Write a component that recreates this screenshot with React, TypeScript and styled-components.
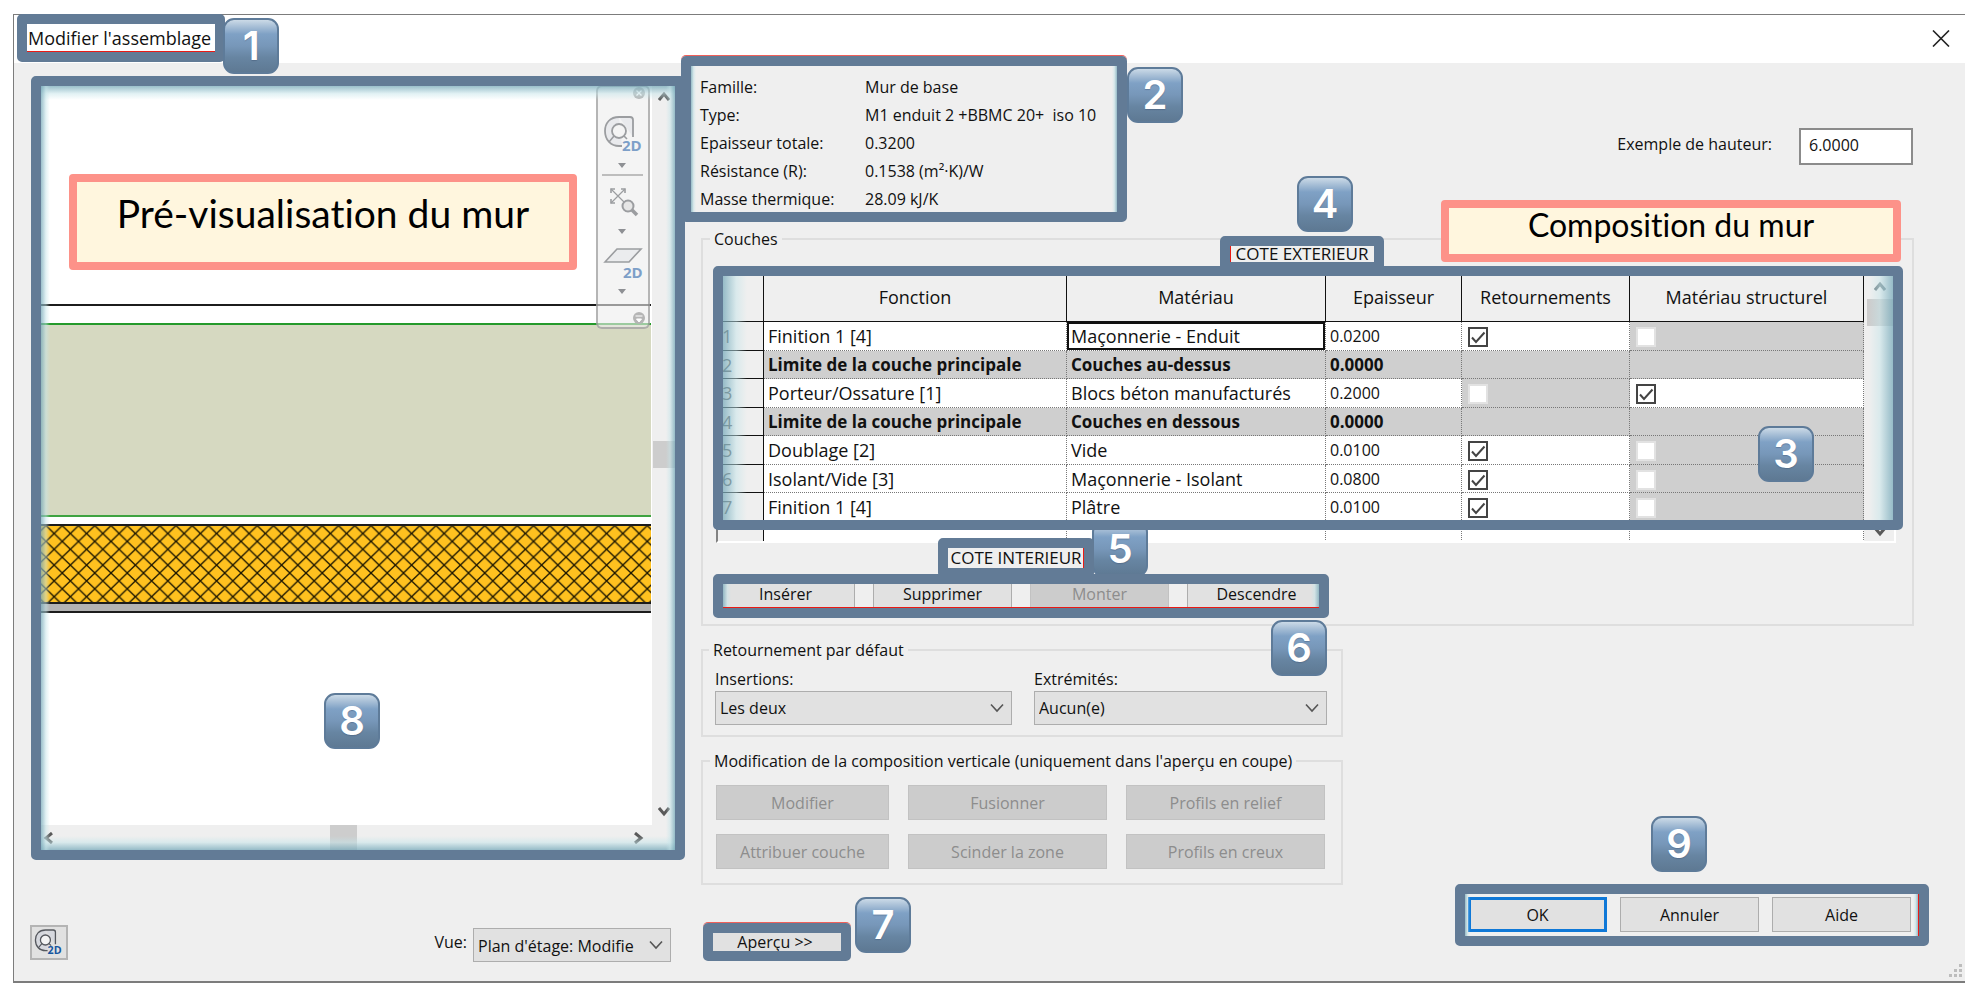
import React from "react";
import styled, { createGlobalStyle, css } from "styled-components";

const uiFont = `"Open Sans", "Noto Sans", sans-serif`;
const noteFont = `Lato, "Noto Sans", sans-serif`;
const badgeFont = `Inter, Roboto, sans-serif`;

const colors = {
  surface: "#efefef",
  frame: "#627b96",
  groupLine: "#dedede",
  muted: "#cfcfcf",
  red: "#ea1a14",
};

const GlobalStyle = createGlobalStyle`
  * { box-sizing: border-box; }
  body {
    margin: 0;
    background: #fff;
    color: #111;
    font-family: ${uiFont};
    font-size: 16px;
    line-height: 22px;
  }
  button, input, select { font: inherit; color: inherit; margin: 0; }
`;

/* ---------- window ---------- */

const Page = styled.div`
  min-height: 100vh;
  padding: 14px 17px 6px 13px;
`;

const Dialog = styled.main`
  position: relative;
  border: solid #7c7c7c;
  border-width: 1px 0 2px 1px;
  background: ${colors.surface};
`;

const TitleBar = styled.header`
  display: flex;
  align-items: center;
  justify-content: space-between;
  height: 48px;
  padding: 0 15px 2px 13px;
  background: #fff;
`;

const Title = styled.h1`
  margin: 0;
  padding: 0 4px 0 1px;
  font-size: 18px;
  font-weight: 400;
  line-height: 28px;
`;

const CloseButton = styled.button`
  display: flex;
  padding: 0;
  border: 0;
  background: none;
`;

const Body = styled.div`
  display: grid;
  grid-template-columns: minmax(0, 670fr) minmax(0, 1281fr);
`;

const ResizeGrip = styled.svg`
  position: absolute;
  right: 2px;
  bottom: 3px;
`;

/* ---------- annotations ---------- */

const Callout = styled.div`
  position: relative;
`;

type Glow = { $x?: number; $y?: number };

const Frame = styled.span<
  Glow & {
    $inset?: string;
    $redTop?: boolean;
    $redInner?: "left" | "right" | "bottom";
  }
>`
  position: absolute;
  z-index: 2;
  inset: ${(p) => p.$inset ?? "-10px"};
  border: 10px solid ${colors.frame};
  border-radius: 5px;
  pointer-events: none;
  ${(p) => p.$redTop && `box-shadow: 0 -1px 0 #f0605a;`}

  &::before {
    content: "";
    position: absolute;
    inset: 0;
    background:
      linear-gradient(to right, rgba(120, 170, 186, 0.75), rgba(196, 228, 233, 0.5) 55%, rgba(220, 240, 243, 0)) left / ${(p) => p.$x ?? 0}px 100% no-repeat,
      linear-gradient(to left, rgba(120, 170, 186, 0.75), rgba(196, 228, 233, 0.5) 55%, rgba(220, 240, 243, 0)) right / ${(p) => p.$x ?? 0}px 100% no-repeat,
      linear-gradient(to bottom, rgba(120, 170, 186, 0.75), rgba(196, 228, 233, 0.5) 55%, rgba(220, 240, 243, 0)) top / 100% ${(p) => p.$y ?? 0}px no-repeat,
      linear-gradient(to top, rgba(120, 170, 186, 0.75), rgba(196, 228, 233, 0.5) 55%, rgba(220, 240, 243, 0)) bottom / 100% ${(p) => p.$y ?? 0}px no-repeat;
    ${(p) => p.$redInner && `border-${p.$redInner}: 1px solid ${colors.red};`}
  }
`;

const Badge = styled.span<{ $left: string; $top: string; $under?: boolean }>`
  position: absolute;
  z-index: ${(p) => (p.$under ? 1 : 3)};
  left: ${(p) => p.$left};
  top: ${(p) => p.$top};
  width: 56px;
  height: 56px;
  border: 2px solid #5e7b99;
  border-radius: 11px;
  background: linear-gradient(#cbdae7, #a9c0d7 12%, #7fa1c5 27%, #7797b9 50%, #6785a2 72%, #5e7993);
  color: #fff;
  font: 600 40px / 52px ${badgeFont};
  text-align: center;
  text-shadow: 0 1px 1px rgba(60, 80, 110, 0.4);
`;

const Note = styled.p<{ $size: number; $line: number }>`
  margin: 0;
  border: 8px solid #fd9289;
  border-radius: 4px;
  background: #fff6de;
  color: #000;
  font: 400 ${(p) => p.$size}px / ${(p) => p.$line}px ${noteFont};
  font-variant-ligatures: none;
  text-align: center;
  white-space: nowrap;
`;

const PreviewNote = styled(Note)`
  position: absolute;
  z-index: 3;
  left: 28px;
  top: 88px;
  width: 508px;
  height: 96px;
`;

const CompositionNote = styled(Note)`
  position: absolute;
  z-index: 3;
  right: 64px;
  top: 137px;
  width: 460px;
  height: 62px;
`;

/* ---------- preview column ---------- */

const PreviewColumn = styled.section`
  display: flex;
  flex-direction: column;
  gap: 75px;
  padding: 23px 9px 19px 16px;
`;

const Preview = styled(Callout)`
  display: grid;
  grid-template-columns: minmax(0, 1fr) 23px;
  grid-template-rows: 739px 25px;
  margin-left: 11px;
  background: ${colors.surface};
`;

const Drawing = styled.div`
  position: relative;
  border-right: 1px solid #fff;
  background: #fff;
`;

const WallSection = styled.svg`
  display: block;
  width: 100%;
  height: 100%;
`;

const NavBar = styled.div`
  position: absolute;
  top: -1px;
  right: 1px;
  display: flex;
  flex-direction: column;
  align-items: center;
  width: 54px;
  height: 244px;
  border: 2px solid rgba(130, 130, 130, 0.55);
  border-radius: 6px;
  background: rgba(236, 236, 236, 0.6);
`;

const VerticalTrack = styled.div`
  display: flex;
  flex-direction: column;
  align-items: center;
  justify-content: space-between;
  padding: 5px 0 8px 1px;
`;

const HorizontalTrack = styled.div`
  display: flex;
  align-items: center;
  justify-content: space-between;
  padding: 0 8px 0 2px;
`;

const Thumb = styled.span<{ $w: number; $h: number }>`
  width: ${(p) => p.$w}px;
  height: ${(p) => p.$h}px;
  background: #cdcdcd;
`;

const PreviewFooter = styled.div`
  display: flex;
  align-items: flex-start;
  justify-content: space-between;
  margin-right: 4px;
`;

const IconButton = styled.button`
  width: 38px;
  height: 35px;
  padding: 0;
  border: 2px solid #b4b4b4;
  background: #e1e1e1;

  svg { display: block; margin: 0 auto; }
`;

const ViewField = styled.div`
  display: flex;
  align-items: flex-start;
  gap: 6px;
  line-height: 34px;
`;

/* ---------- controls ---------- */

const SelectBox = styled.span`
  position: relative;
  display: flex;
  width: 100%;

  svg {
    position: absolute;
    right: 8px;
    top: 12px;
    pointer-events: none;
  }
`;

const Select = styled.select`
  appearance: none;
  width: 100%;
  height: 34px;
  padding: 0 24px 0 4px;
  border: 1px solid #adadad;
  border-radius: 0;
  background: #e1e1e1;
`;

const ViewSelect = styled(SelectBox)`
  width: 198px;
  margin-top: 3px;
`;

const Button = styled.button<{ $primary?: boolean }>`
  height: 35px;
  padding: 0;
  border: 1px solid #adadad;
  background: #e1e1e1;
  white-space: nowrap;

  &:disabled {
    border-color: #c2c2c2;
    background: #cccccc;
    color: #8d8d8d;
  }

  ${(p) =>
    p.$primary &&
    css`
      border: 3px solid #0f78d7;
    `}
`;

/* ---------- right column ---------- */

const SettingsColumn = styled.section`
  position: relative;
  display: flex;
  flex-direction: column;
`;

const TopRow = styled.div`
  display: flex;
  align-items: flex-start;
  justify-content: space-between;
  padding: 3px 52px 0 7px;
`;

const WallInfo = styled(Callout)`
  width: 426px;
  height: 146px;
  padding: 7px 0 0 9px;
`;

const InfoList = styled.dl`
  display: grid;
  grid-template-columns: 165px 1fr;
  margin: 0;
  line-height: 28px;
  white-space: pre;

  dd { margin: 0; }
`;

const HeightField = styled.div`
  display: flex;
  align-items: flex-start;
  gap: 27px;
  margin-top: 62px;
  line-height: 33px;
`;

const HeightInput = styled.input`
  width: 114px;
  height: 37px;
  padding: 0 8px 3px;
  border: 2px solid #8b8b8b;
  background: #fff;
`;

const Group = styled.fieldset<{ $width?: string; $pad: string }>`
  width: ${(p) => p.$width ?? "auto"};
  min-width: 0;
  margin: 13px 51px 0 17px;
  padding: ${(p) => p.$pad};
  border: 2px solid ${colors.groupLine};

  legend {
    margin-left: -6px;
    padding: 0 4px;
    line-height: 22px;
  }
`;

const LayersGroup = styled(Group)`
  margin-top: 16px;
`;

const SideRow = styled.div<{ $edge: "outside" | "inside" }>`
  display: flex;
  justify-content: center;
  ${(p) =>
    p.$edge === "outside"
      ? "margin: -4px 0 10px; padding-right: 24px;"
      : "width: 600px; margin: 5px 0 10px;"}
`;

const SideLabel = styled(Callout)<{ $h: number; $w: number }>`
  width: ${(p) => p.$w}px;
  height: ${(p) => p.$h}px;
  font-size: 17px;
  line-height: ${(p) => p.$h}px;
  text-align: center;
  white-space: nowrap;
`;

const TableArea = styled(Callout)`
  display: grid;
  grid-template-columns: minmax(0, 1fr) 30px;
  margin-right: 16px;
  height: 271px;
  border: solid;
  border-width: 0 2px 2px 2px;
  border-color: #fff #fff #fff #828282;
  background: #fff;
`;

const TableClip = styled.div`
  overflow: hidden;
  height: 269px;

  tfoot tr { height: 20px; }
  tfoot th, tfoot td { border-bottom: 0; }
`;

const LayerTable = styled.table`
  width: 100%;
  border-collapse: separate;
  border-spacing: 0;
  table-layout: fixed;
  font-size: 18px;
  line-height: 26px;
`;

const HeadCell = styled.th`
  height: 50px;
  padding: 0;
  border: solid #111;
  border-width: 0 1px 1px 0;
  background: ${colors.surface};
  font-weight: 400;
`;

const Row = styled.tr<{ $boundary?: boolean }>`
  height: 28px;
  &:nth-child(odd) { height: 29px; }
  ${(p) =>
    p.$boundary &&
    css`
      background: ${colors.muted};
      font-weight: 700;
      font-size: 17px;
    `}
`;

const RowHead = styled.th`
  padding: 0 0 0 4px;
  border: solid #111;
  border-width: 0 1px 1px 0;
  background: ${colors.surface};
  color: #555;
  font-size: 18px;
  font-weight: 400;
  text-align: left;
`;

const Cell = styled.td<{ $off?: boolean; $active?: boolean; $small?: boolean }>`
  padding: 0 0 0 4px;
  border: dotted #777;
  border-width: 0 1px 1px 0;
  white-space: nowrap;
  ${(p) => p.$off && `background: ${colors.muted};`}
  ${(p) => p.$small && "font-size: 16px;"}
  ${(p) => p.$active && "box-shadow: inset 0 0 0 2px #111;"}
`;

const CheckBox = styled.span`
  position: relative;
  display: block;

  svg {
    position: absolute;
    left: 5px;
    top: 4px;
    pointer-events: none;
  }
`;

const Check = styled.input`
  appearance: none;
  display: block;
  width: 20px;
  height: 20px;
  border: 2px solid #444;
  background: #fff;

  && { margin: 2px 0 0 2px; }
  &:disabled { border-color: #e2e2e2; }
`;

const TableTrack = styled.div`
  display: flex;
  flex-direction: column;
  align-items: center;
  padding: 9px 0 4px 2px;
  background: ${colors.surface};

  svg:last-child { margin-top: auto; }
  span { margin-top: 6px; }
`;

const RowActions = styled(Callout)`
  display: grid;
  grid-template-columns: repeat(4, 139px);
  gap: 18px;
  width: 610px;

  button { height: 34px; padding-bottom: 2px; }
`;

const FieldGrid = styled.div`
  display: grid;
  grid-template-columns: 297px 293px;
  column-gap: 22px;
  row-gap: 1px;
`;

const ActionGrid = styled.div`
  display: grid;
  grid-template-columns: 173px 199px 199px;
  gap: 14px 19px;
`;

const BottomRow = styled.div`
  display: flex;
  align-items: flex-start;
  justify-content: space-between;
  padding: 9px 46px 0 29px;
`;

const PreviewToggle = styled(Callout)`
  display: grid;
  width: 128px;
  height: 18px;
  margin-top: 39px;

  button {
    height: 18px;
    border: 0;
    line-height: 18px;
    padding-right: 4px;
  }
`;

const DialogActions = styled(Callout)`
  display: grid;
  grid-template-columns: repeat(3, 139px);
  gap: 13px;
  padding: 3px 8px 4px 3px;
`;

/* ---------- icons ---------- */

const Chevron = ({ dir, color = "#5a5a5a" }: { dir: "up" | "down" | "left" | "right"; color?: string }) => {
  const d = {
    up: "M1 9 L6 3 L11 9",
    down: "M1 3 L6 9 L11 3",
    left: "M9 1 L3 6 L9 11",
    right: "M3 1 L9 6 L3 11",
  }[dir];
  return (
    <svg width="12" height="12" viewBox="0 0 12 12" aria-hidden="true">
      <path d={d} fill="none" stroke={color} strokeWidth="3" />
    </svg>
  );
};

const Caret = () => (
  <svg width="14" height="10" viewBox="0 0 14 10" aria-hidden="true">
    <path d="M1 1.5 L7 8 L13 1.5" fill="none" stroke="#555" strokeWidth="1.6" />
  </svg>
);

const Tick = () => (
  <svg width="15" height="14" viewBox="0 0 15 14" aria-hidden="true">
    <path d="M1 6.500 L5 11 L13.500 1.500" fill="none" stroke="#444" strokeWidth="2" />
  </svg>
);

const Wheel2D = ({ ink, blue, shade }: { ink: string; blue: string; shade: string }) => (
  <>
    <path
      d="M15 1 H26 Q29 1 29 4 V21 M15 1 C6 1 1 7 1 15 C1 24 7 30 15 30 H18"
      fill={shade}
      stroke={ink}
      strokeWidth="1.8"
    />
    <circle cx="15" cy="15" r="7" fill="#f4f4f4" stroke={ink} strokeWidth="1.8" />
    <path d="M10 20 L5 26 M20 20 L23 23" stroke={ink} strokeWidth="1.6" />
    <text x="18" y="35" fill={blue} fontFamily="Open Sans, sans-serif" fontSize="15" fontWeight="700">
      2D
    </text>
  </>
);

const NavIcons = () => (
  <svg width="50" height="240" viewBox="0 0 50 240" role="img" aria-label="Navigation 2D">
    <g>
      <circle cx="41" cy="6" r="6" fill="#b5b5b5" />
      <path d="M38.500 3.500 L43.500 8.500 M43.500 3.500 L38.500 8.500" stroke="#fff" strokeWidth="1.3" />
    </g>
    <g transform="translate(6 29)">
      <Wheel2D ink="#9b9da0" blue="#7d9fc8" shade="#e9eaed" />
    </g>
    <path d="M20 76 H28 L24 81 Z M20 142 H28 L24 147 Z M20 202 H28 L24 207 Z" fill="#8e9094" />
    <path d="M4 88 H45" stroke="#bdbdbd" strokeWidth="2" />
    <g fill="none" stroke="#9b9da0" strokeWidth="1.600">
      <path d="M13 102 L27 116 M27 102 L13 116" strokeWidth="1.200" />
      <path d="M13 106 V102 H17 M23 102 H27 V106 M13 112 V116 H17" />
      <circle cx="30" cy="119" r="5.500" fill="#e6e6e6" strokeWidth="2" />
      <path d="M34 123 L39 128" strokeWidth="3.500" />
      <path d="M7 175 L19 162 H43 L31 175 Z" fill="#ebecee" />
    </g>
    <text x="25" y="191" fill="#7d9fc8" fontFamily="Open Sans, sans-serif" fontSize="15" fontWeight="700">
      2D
    </text>
    <circle cx="41" cy="231" r="6" fill="#b5b5b5" />
    <path d="M37.500 229 H44.500 M38.500 232 H43.500 L41 235 Z" fill="#fff" stroke="#fff" />
  </svg>
);

const WallPreview = () => (
  <WallSection role="img" aria-label="Coupe du mur">
    <defs>
      <pattern id="insulation" width="16.25" height="15.800" x="5" y="13" patternUnits="userSpaceOnUse">
        <path d="M0 0 L16.250 15.800 M16.250 0 L0 15.800" stroke="#1c1600" strokeWidth="1.300" />
      </pattern>
    </defs>
    <rect y="218" width="100%" height="2" fill="#1c1c1c" />
    <rect y="237" width="100%" height="193" fill="#d6d9c1" />
    <rect y="237" width="100%" height="2" fill="#259a2b" />
    <rect y="429" width="100%" height="2" fill="#3fa341" />
    <rect y="439" width="100%" height="78" fill="#ffc11f" />
    <rect y="439" width="100%" height="78" fill="url(#insulation)" />
    <rect y="438" width="100%" height="2" fill="#1c1c1c" />
    <rect y="516" width="100%" height="10" fill="#b3b3b3" />
    <rect y="516" width="100%" height="2" fill="#1c1c1c" />
    <rect y="525" width="100%" height="2" fill="#1c1c1c" />
  </WallSection>
);

/* ---------- data ---------- */

const info: [string, string][] = [
  ["Famille:", "Mur de base"],
  ["Type:", "M1 enduit 2 +BBMC 20+  iso 10"],
  ["Epaisseur totale:", "0.3200"],
  ["Résistance (R):", "0.1538 (m²·K)/W"],
  ["Masse thermique:", "28.09 kJ/K"],
];

type Layer = {
  role: string;
  material: string;
  thickness: string;
  boundary?: boolean;
  wraps?: boolean;
  structural?: boolean;
};

const layers: Layer[] = [
  { role: "Finition 1 [4]", material: "Maçonnerie - Enduit", thickness: "0.0200", wraps: true },
  { role: "Limite de la couche principale", material: "Couches au-dessus", thickness: "0.0000", boundary: true },
  { role: "Porteur/Ossature [1]", material: "Blocs béton manufacturés", thickness: "0.2000", structural: true },
  { role: "Limite de la couche principale", material: "Couches en dessous", thickness: "0.0000", boundary: true },
  { role: "Doublage [2]", material: "Vide", thickness: "0.0100", wraps: true },
  { role: "Isolant/Vide [3]", material: "Maçonnerie - Isolant", thickness: "0.0800", wraps: true },
  { role: "Finition 1 [4]", material: "Plâtre", thickness: "0.0100", wraps: true },
];

const CheckCell = ({ on, boundary, label }: { on?: boolean; boundary?: boolean; label: string }) => (
  <Cell $off={!on}>
    {!boundary && (
      <CheckBox>
        <Check type="checkbox" aria-label={label} defaultChecked={on} disabled={!on} />
        {on && <Tick />}
      </CheckBox>
    )}
  </Cell>
);

const Layers = () => (
  <LayerTable>
    <colgroup>
      <col width="46" />
      <col width="303" />
      <col width="259" />
      <col width="136" />
      <col width="168" />
      <col />
    </colgroup>
    <thead>
      <tr>
        <HeadCell />
        <HeadCell scope="col">Fonction</HeadCell>
        <HeadCell scope="col">Matériau</HeadCell>
        <HeadCell scope="col">Epaisseur</HeadCell>
        <HeadCell scope="col">Retournements</HeadCell>
        <HeadCell scope="col">Matériau structurel</HeadCell>
      </tr>
    </thead>
    <tbody>
      {layers.map((l, i) => (
        <Row key={i} $boundary={l.boundary}>
          <RowHead scope="row">{i + 1}</RowHead>
          <Cell>{l.role}</Cell>
          <Cell $active={i === 0}>{l.material}</Cell>
          <Cell $small={!l.boundary}>{l.thickness}</Cell>
          <CheckCell on={l.wraps} boundary={l.boundary} label={`Retournements, couche ${i + 1}`} />
          <CheckCell on={l.structural} boundary={l.boundary} label={`Matériau structurel, couche ${i + 1}`} />
        </Row>
      ))}
    </tbody>
    <tfoot>
      <tr>
        <RowHead />
        <Cell />
        <Cell />
        <Cell />
        <Cell />
        <Cell />
      </tr>
    </tfoot>
  </LayerTable>
);

export default function App() {
  return (
    <Page>
      <GlobalStyle />
      <Dialog>
        <TitleBar>
          <Callout>
            <Title>Modifier l'assemblage</Title>
            <Frame $redInner="bottom" />
            <Badge $left="calc(100% + 8px)" $top="-6px">1</Badge>
          </Callout>
          <CloseButton aria-label="Fermer">
            <svg width="18" height="17" viewBox="0 0 18 17" aria-hidden="true">
              <path d="M1 0.500 L17 16.500 M17 0.500 L1 16.500" stroke="#222" strokeWidth="1.600" />
            </svg>
          </CloseButton>
        </TitleBar>

        <Body>
          <PreviewColumn>
            <Preview>
              <Drawing>
                <WallPreview />
                <NavBar>
                  <NavIcons />
                </NavBar>
              </Drawing>
              <VerticalTrack>
                <Chevron dir="up" />
                <Thumb $w={22} $h={27} />
                <Chevron dir="down" />
              </VerticalTrack>
              <HorizontalTrack>
                <Chevron dir="left" />
                <Thumb $w={27} $h={25} />
                <Chevron dir="right" />
              </HorizontalTrack>
              <Frame $x={9} $y={14} />
              <PreviewNote $size={39} $line={62}>Pré-visualisation du mur</PreviewNote>
              <Badge $left="283px" $top="607px">8</Badge>
            </Preview>
            <PreviewFooter>
              <IconButton aria-label="Navigation 2D">
                <svg width="30" height="29" viewBox="-1 0 42 37" aria-hidden="true">
                  <Wheel2D ink="#55585e" blue="#17559f" shade="#d6d8de" />
                </svg>
              </IconButton>
              <ViewField>
                <label htmlFor="view">Vue:</label>
                <ViewSelect>
                  <Select id="view">
                    <option>Plan d'étage: Modifie</option>
                  </Select>
                  <Caret />
                </ViewSelect>
              </ViewField>
            </PreviewFooter>
          </PreviewColumn>

          <SettingsColumn>
            <TopRow>
              <WallInfo>
                <InfoList>
                  {info.map(([name, value]) => (
                    <React.Fragment key={name}>
                      <dt>{name}</dt>
                      <dd>{value}</dd>
                    </React.Fragment>
                  ))}
                </InfoList>
                <Frame $x={5} $redTop />
                <Badge $left="calc(100% + 10px)" $top="1px">2</Badge>
              </WallInfo>
              <HeightField>
                <label htmlFor="height">Exemple de hauteur:</label>
                <HeightInput id="height" defaultValue="6.0000" />
              </HeightField>
            </TopRow>

            <LayersGroup $pad="0 0 12px 13px">
              <legend>Couches</legend>
              <SideRow $edge="outside">
                <SideLabel $w={144} $h={16}>
                  COTE EXTERIEUR
                  <Frame $redInner="left" />
                  <Badge $left="67px" $top="-70px">4</Badge>
                </SideLabel>
              </SideRow>
              <TableArea>
                <TableClip>
                  <Layers />
                </TableClip>
                <TableTrack>
                  <Chevron dir="up" color="#6f7f85" />
                  <Thumb $w={26} $h={27} />
                  <Chevron dir="down" />
                </TableTrack>
                <Frame $x={24} $inset="-6px -9px 11px -5px" />
                <Badge $left="calc(100% - 136px)" $top="154px">3</Badge>
              </TableArea>
              <SideRow $edge="inside">
                <SideLabel $w={136} $h={20}>
                  COTE INTERIEUR
                  <Frame $redInner="right" />
                  <Badge $left="144px" $top="-27px" $under>5</Badge>
                </SideLabel>
              </SideRow>
              <RowActions>
                <Button>Insérer</Button>
                <Button>Supprimer</Button>
                <Button disabled>Monter</Button>
                <Button>Descendre</Button>
                <Frame $x={8} $inset="-4px -3px -6px -3px" $redInner="bottom" />
                <Badge $left="555px" $top="42px">6</Badge>
              </RowActions>
            </LayersGroup>

            <Group $width="642px" $pad="7px 12px 10px">
              <legend>Retournement par défaut</legend>
              <FieldGrid>
                <label htmlFor="insertions">Insertions:</label>
                <label htmlFor="ends">Extrémités:</label>
                <SelectBox>
                  <Select id="insertions">
                    <option>Les deux</option>
                  </Select>
                  <Caret />
                </SelectBox>
                <SelectBox>
                  <Select id="ends">
                    <option>Aucun(e)</option>
                  </Select>
                  <Caret />
                </SelectBox>
              </FieldGrid>
            </Group>

            <Group $width="642px" $pad="13px 13px 14px">
              <legend>Modification de la composition verticale (uniquement dans l'aperçu en coupe)</legend>
              <ActionGrid>
                <Button disabled>Modifier</Button>
                <Button disabled>Fusionner</Button>
                <Button disabled>Profils en relief</Button>
                <Button disabled>Attribuer couche</Button>
                <Button disabled>Scinder la zone</Button>
                <Button disabled>Profils en creux</Button>
              </ActionGrid>
            </Group>

            <BottomRow>
              <PreviewToggle>
                <Button>Aperçu &gt;&gt;</Button>
                <Frame $redTop />
                <Badge $left="142px" $top="-36px">7</Badge>
              </PreviewToggle>
              <DialogActions>
                <Button $primary>OK</Button>
                <Button>Annuler</Button>
                <Button>Aide</Button>
                <Frame $x={5} $redInner="right" />
                <Badge $left="186px" $top="-78px">9</Badge>
              </DialogActions>
            </BottomRow>
            <CompositionNote $size={32} $line={34}>Composition du mur</CompositionNote>
          </SettingsColumn>
        </Body>

        <ResizeGrip width="14" height="14" viewBox="0 0 14 14" aria-hidden="true">
          <path
            d="M10 0 H13 V3 H10 Z M5 5 H8 V8 H5 Z M10 5 H13 V8 H10 Z M0 10 H3 V13 H0 Z M5 10 H8 V13 H5 Z M10 10 H13 V13 H10 Z"
            fill="#bdbdbd"
          />
        </ResizeGrip>
      </Dialog>
    </Page>
  );
}
